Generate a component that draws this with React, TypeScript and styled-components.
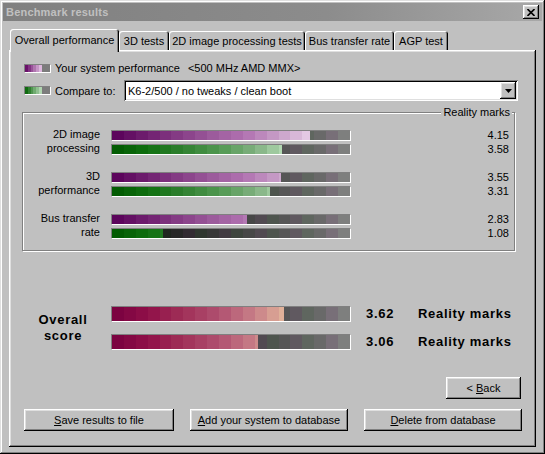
import React from "react";
import styled, { createGlobalStyle } from "styled-components";

type Stop = [number, string];

const hex = (c: string) => [1, 3, 5].map((i) => parseInt(c.slice(i, i + 2), 16));

const colorAt = (stops: Stop[], t: number): number[] => {
  for (let i = 1; i < stops.length; i++) {
    if (t <= stops[i][0]) {
      const [t0, c0] = stops[i - 1];
      const [t1, c1] = stops[i];
      const k = (t - t0) / (t1 - t0);
      const a = hex(c0);
      const b = hex(c1);
      return a.map((v, j) => Math.round(v + (b[j] - v) * k));
    }
  }
  return hex(stops[stops.length - 1][1]);
};

// blocky gradient like the old 256-colour bars
const stepped = (stops: Stop[], n: number, tint = false) => {
  const parts: string[] = [];
  for (let i = 0; i < n; i++) {
    let [r, g, b] = colorAt(stops, (i + 0.5) / n);
    if (tint) {
      const d = i % 3 === 0 ? [5, -2, 5] : i % 3 === 1 ? [-3, 4, -3] : [0, 0, 0];
      r += d[0];
      g += d[1];
      b += d[2];
    }
    const c = `rgb(${r},${g},${b})`;
    parts.push(`${c} ${((i * 100) / n).toFixed(2)}%`, `${c} ${(((i + 1) * 100) / n).toFixed(2)}%`);
  }
  return `linear-gradient(to right, ${parts.join(", ")})`;
};

const PURPLE: Stop[] = [[0, "#580058"], [0.15, "#702070"], [0.3, "#884088"], [0.45, "#a060a0"], [0.55, "#b070b0"], [0.7, "#c8a0c8"], [0.85, "#e8d0e8"], [1, "#f4ecf4"]];
const GREEN: Stop[] = [[0, "#005800"], [0.15, "#107010"], [0.3, "#308030"], [0.45, "#509850"], [0.6, "#80b080"], [0.72, "#b0d8b0"], [1, "#e0f0e0"]];
const CRIMSON: Stop[] = [[0, "#780040"], [0.15, "#901048"], [0.3, "#a03058"], [0.45, "#b05070"], [0.6, "#c88088"], [0.72, "#e0b098"], [1, "#f0d8c0"]];
const SHADOW: Stop[] = [[0, "#101010"], [0.2, "#202020"], [0.4, "#343434"], [0.57, "#464646"], [0.75, "#585858"], [0.9, "#6c6c6c"], [1, "#888088"]];

const fills = {
  purple: stepped(PURPLE, 20),
  green: stepped(GREEN, 20),
  crimson: stepped(CRIMSON, 20),
  swPurple: stepped([[0, "#600060"], [1, "#e8c8e8"]], 6),
  swGreen: stepped([[0, "#006000"], [1, "#c0e0c0"]], 6),
};
const shadowBg = stepped(SHADOW, 20, true);
const swatchBg = stepped([[0, "#686868"], [1, "#808080"]], 3, true);

const GlobalStyle = createGlobalStyle`
  html, body { margin: 0; padding: 0; background: #c0c0c0; }
  body {
    font-family: "Liberation Sans", Arial, sans-serif;
    font-size: 11px;
    color: #000;
  }
`;

const Window = styled.div`
  width: 545px;
  height: 454px;
  box-sizing: border-box;
  padding: 3px;
  background: #c0c0c0;
  box-shadow: inset -1px -1px #000, inset 1px 1px #dfdfdf, inset -2px -2px #808080, inset 2px 2px #fff;
  display: flex;
  flex-direction: column;
`;

const TitleBar = styled.div`
  height: 18px;
  padding: 0 3px 0 3px;
  display: flex;
  align-items: center;
  justify-content: space-between;
  background: linear-gradient(to right, #808080, #8c8c8c 60%, #a8a8a8);
`;

const TitleText = styled.span`
  color: #c0c0c0;
  font-weight: bold;
  font-size: 11px;
  letter-spacing: 0.2px;
`;

const Raised = styled.div`
  background: #c0c0c0;
  box-shadow: inset -1px -1px #000, inset 1px 1px #fff, inset -2px -2px #808080, inset 2px 2px #dfdfdf;
`;

const CloseButton = styled(Raised)`
  width: 16px;
  height: 14px;
  display: flex;
  align-items: center;
  justify-content: center;
`;

const TabStrip = styled.div`
  margin-top: 8px;
  height: 21px;
  padding-left: 7px;
  display: flex;
  align-items: flex-end;
  position: relative;
  z-index: 1;
`;

const Tab = styled.div<{ $active?: boolean; $w: number }>`
  width: ${(p) => p.$w}px;
  height: ${(p) => (p.$active ? 23 : 19)}px;
  margin-bottom: ${(p) => (p.$active ? -2 : 0)}px;
  padding-bottom: ${(p) => (p.$active ? 2 : 0)}px;
  box-sizing: border-box;
  background: #c0c0c0;
  border-radius: 3px 3px 0 0;
  box-shadow: inset 1px 1px #fff, inset -1px 0 #000, inset -2px 0 #808080;
  display: flex;
  align-items: center;
  justify-content: center;
  white-space: nowrap;
`;

const Panel = styled.div`
  flex: 1;
  margin: 0 6px 4px 6px;
  padding: 2px;
  box-shadow: inset -1px -1px #000, inset 1px 1px #fff, inset -2px -2px #808080, inset 2px 2px #dfdfdf;
  display: flex;
  flex-direction: column;
`;

const LegendRow = styled.div<{ $top: number; $h: number }>`
  display: flex;
  align-items: center;
  height: ${(p) => p.$h}px;
  margin: ${(p) => p.$top}px 0 0 13px;
  white-space: pre;
`;

const LegendLabel = styled.span<{ $w?: number }>`
  margin-left: 4px;
  width: ${(p) => (p.$w ? `${p.$w}px` : "auto")};
`;

const Combo = styled.div`
  width: 394px;
  height: 21px;
  box-sizing: border-box;
  padding: 2px 2px 2px 4px;
  background: #fff;
  box-shadow: inset 1px 1px #808080, inset -1px -1px #fff, inset 2px 2px #000, inset -2px -2px #dfdfdf;
  display: flex;
  align-items: center;
  justify-content: space-between;
`;

const DropButton = styled(Raised)`
  width: 16px;
  height: 17px;
  display: flex;
  align-items: center;
  justify-content: center;
`;

const GroupBox = styled.div`
  position: relative;
  width: 493px;
  box-sizing: border-box;
  margin: 11px 0 0 11px;
  padding: 15px 4px 10px 1px;
  border: 1px solid #808080;
  box-shadow: inset 1px 1px #fff, 1px 1px #fff;
  display: flex;
  flex-direction: column;
  gap: 14px;
`;

const GroupLegend = styled.span`
  position: absolute;
  top: -7px;
  right: 2px;
  padding: 0 2px;
  line-height: 13px;
  background: #c0c0c0;
`;

const Metric = styled.div`
  display: grid;
  grid-template-columns: 87px 240px 1fr;
  grid-template-rows: 14px 14px;
`;

const MetricLabel = styled.div`
  grid-row: 1 / span 2;
  padding-right: 11px;
  margin-top: -1px;
  text-align: right;
  line-height: 14px;
`;

const MetricValue = styled.div`
  text-align: right;
  line-height: 14px;
  padding-right: 1px;
`;

const Track = styled.div<{ $w: number; $h: number }>`
  width: ${(p) => p.$w}px;
  height: ${(p) => p.$h}px;
  box-sizing: border-box;
  border-top: 1px solid #808080;
  border-left: 1px solid #808080;
  border-bottom: 1px solid #fff;
  border-right: 1px solid #fff;
  background: ${(p) => p.$bg};
  display: flex;
  align-self: center;
`;

const Fill = styled.div<{ $bg: string; $size: number }>`
  height: 100%;
  background: ${(p) => p.$bg};
  background-size: ${(p) => p.$size}px 100%;
  background-repeat: no-repeat;
`;

const ScoreSection = styled.div`
  display: grid;
  grid-template-columns: 87px 255px 52px auto;
  grid-template-rows: 16px 16px;
  row-gap: 12px;
  margin: 55px 0 0 13px;
  font-size: 13px;
  font-weight: bold;
  letter-spacing: 0.7px;
`;

const ScoreLabel = styled.div`
  grid-row: 1 / span 2;
  align-self: center;
  padding-right: 9px;
  text-align: center;
  line-height: 16px;
`;

const ScoreText = styled.div`
  line-height: 16px;
  white-space: nowrap;
`;

const BackRow = styled.div`
  display: flex;
  justify-content: flex-end;
  margin: 27px 13px 0 0;
`;

const ButtonRow = styled.div`
  display: flex;
  gap: 16px;
  margin: 10px 0 0 13px;
`;

const Button = styled.button<{ $w: number }>`
  width: ${(p) => p.$w}px;
  height: 22px;
  padding: 0;
  border: none;
  font: inherit;
  color: #000;
  background: #c0c0c0;
  box-shadow: inset -1px -1px #000, inset 1px 1px #fff, inset -2px -2px #808080, inset 2px 2px #dfdfdf;
  u { text-decoration: underline; }
`;

const Bar: React.FC<{ value: number; fill: string; w?: number; h?: number; bg?: string; stretch?: boolean }> = ({
  value,
  fill,
  w = 240,
  h = 11,
  bg = shadowBg,
  stretch,
}) => {
  const inner = w - 2;
  const fw = Math.round((value / 5) * inner);
  return (
    <Track $w={w} $h={h} $bg={bg}>
      <Fill $bg={fill} $size={stretch ? fw : inner} style={{ width: fw }} />
    </Track>
  );
};

const metrics = [
  { label: ["2D image", "processing"], you: 4.15, other: 3.58 },
  { label: ["3D ", "performance"], you: 3.55, other: 3.31 },
  { label: ["Bus transfer", "rate"], you: 2.83, other: 1.08 },
];

const tabs: [string, number][] = [
  ["Overall performance", 109],
  ["3D tests", 50],
  ["2D image processing tests", 136],
  ["Bus transfer rate", 89],
  ["AGP test", 54],
];

const App: React.FC = () => {
  return (
    <>
      <GlobalStyle />
      <Window>
        <TitleBar>
          <TitleText>Benchmark results</TitleText>
          <CloseButton>
            <svg width="8" height="7" viewBox="0 0 8 7">
              <path d="M0.5 0 L7.5 7 M7.5 0 L0.5 7" stroke="#000" strokeWidth="1.6" />
            </svg>
          </CloseButton>
        </TitleBar>

        <TabStrip>
          {tabs.map(([name, w], i) => (
            <Tab key={name} $w={w} $active={i === 0}>
              {name}
            </Tab>
          ))}
        </TabStrip>

        <Panel>
          <LegendRow $top={9} $h={14}>
            <Bar value={3.4} fill={fills.swPurple} w={27} h={9} bg={swatchBg} stretch />
            <LegendLabel>Your system performance</LegendLabel>
            <span style={{ marginLeft: 8 }}>&lt;500 MHz AMD MMX&gt;</span>
          </LegendRow>
          <LegendRow $top={5} $h={21}>
            <Bar value={3.4} fill={fills.swGreen} w={27} h={9} bg={swatchBg} stretch />
            <LegendLabel $w={69}>Compare to:</LegendLabel>
            <Combo>
              <span>K6-2/500 / no tweaks / clean boot</span>
              <DropButton>
                <svg width="7" height="4" viewBox="0 0 7 4">
                  <polygon points="0,0 7,0 3.5,4" fill="#000" />
                </svg>
              </DropButton>
            </Combo>
          </LegendRow>

          <GroupBox>
            <GroupLegend>Reality marks</GroupLegend>
            {metrics.map((m) => (
              <Metric key={m.label[0]}>
                <MetricLabel>
                  {m.label[0]}
                  <br />
                  {m.label[1]}
                </MetricLabel>
                <Bar value={m.you} fill={fills.purple} />
                <MetricValue>{m.you.toFixed(2)}</MetricValue>
                <Bar value={m.other} fill={fills.green} />
                <MetricValue>{m.other.toFixed(2)}</MetricValue>
              </Metric>
            ))}
          </GroupBox>

          <ScoreSection>
            <ScoreLabel>
              Overall
              <br />
              score
            </ScoreLabel>
            <Bar value={3.62} fill={fills.crimson} h={16} />
            <ScoreText>3.62</ScoreText>
            <ScoreText>Reality marks</ScoreText>
            <Bar value={3.06} fill={fills.crimson} h={16} />
            <ScoreText>3.06</ScoreText>
            <ScoreText>Reality marks</ScoreText>
          </ScoreSection>

          <BackRow>
            <Button $w={75}>
              &lt; <u>B</u>ack
            </Button>
          </BackRow>
          <ButtonRow>
            <Button $w={150}>
              <u>S</u>ave results to file
            </Button>
            <Button $w={158}>
              <u>A</u>dd your system to database
            </Button>
            <Button $w={158}>
              <u>D</u>elete from database
            </Button>
          </ButtonRow>
        </Panel>
      </Window>
    </>
  );
};

export default App;
